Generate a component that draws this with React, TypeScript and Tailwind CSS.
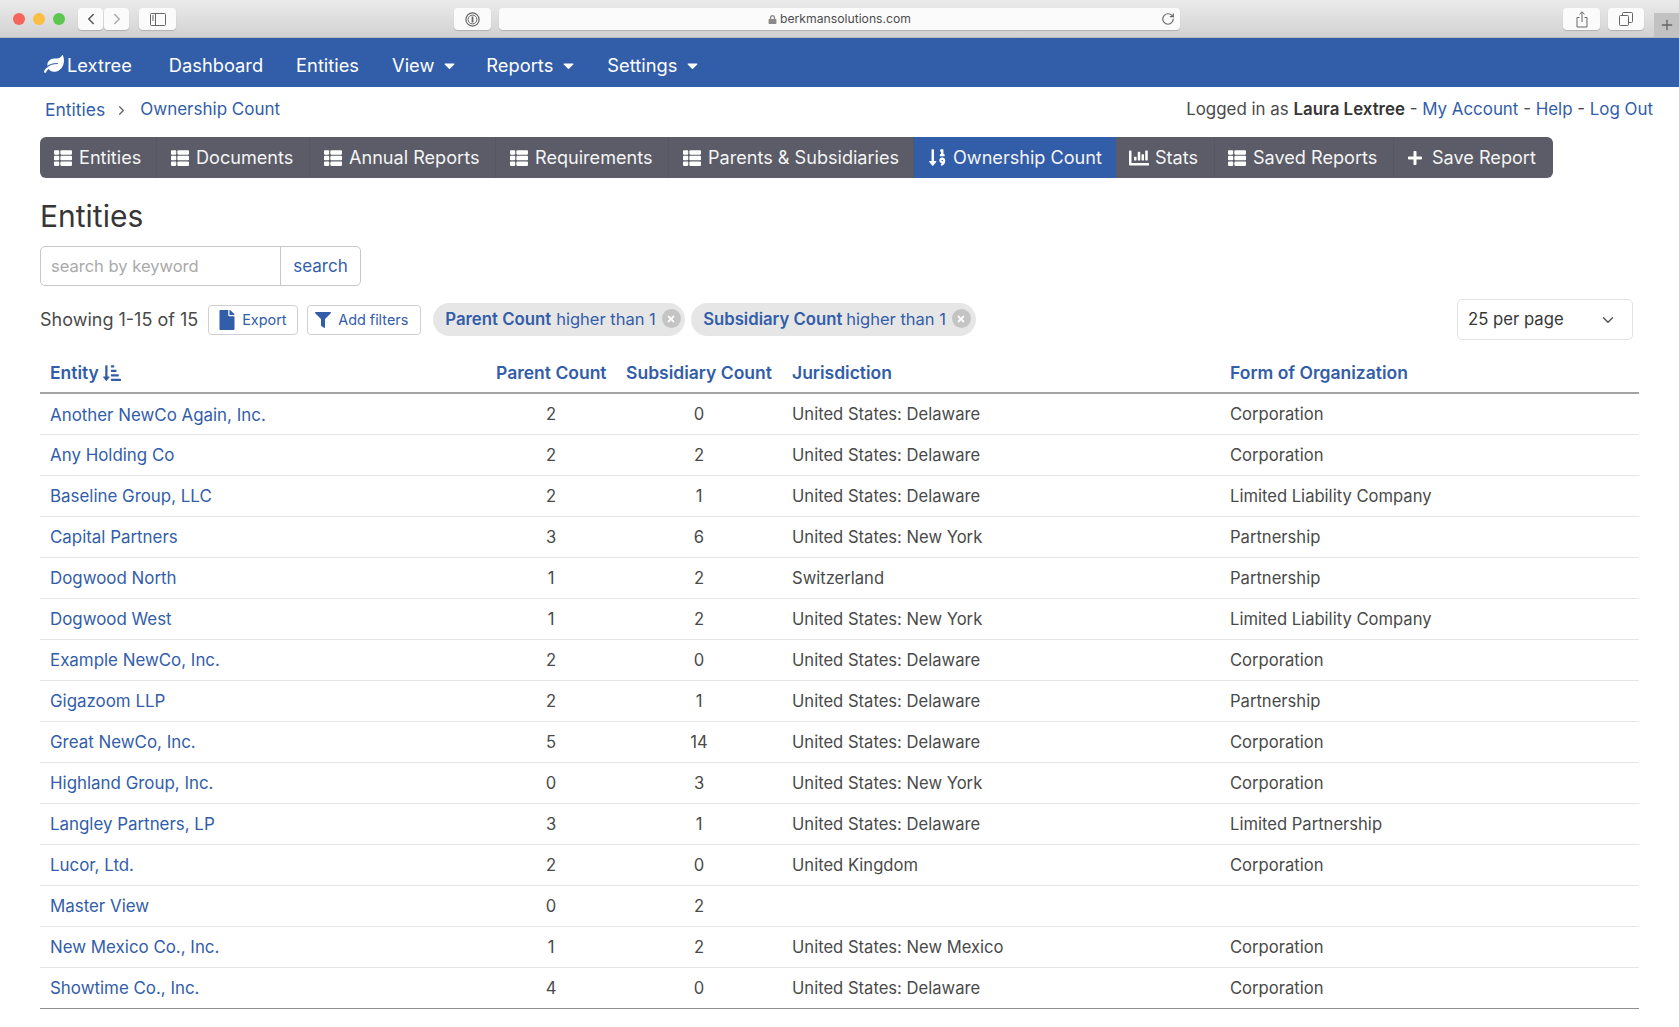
import React from "react";
import { FaLeaf, FaThList, FaSortNumericDown, FaChartBar, FaPlus, FaFile, FaFilter, FaSortAmountDownAlt, FaTimes, FaCaretDown, FaLock } from "react-icons/fa";
import { LuChevronLeft, LuChevronRight, LuChevronDown, LuRotateCw, LuPlus } from "react-icons/lu";

const rows: [string, string, string, string, string][] = [
  ["Another NewCo Again, Inc.", "2", "0", "United States: Delaware", "Corporation"],
  ["Any Holding Co", "2", "2", "United States: Delaware", "Corporation"],
  ["Baseline Group, LLC", "2", "1", "United States: Delaware", "Limited Liability Company"],
  ["Capital Partners", "3", "6", "United States: New York", "Partnership"],
  ["Dogwood North", "1", "2", "Switzerland", "Partnership"],
  ["Dogwood West", "1", "2", "United States: New York", "Limited Liability Company"],
  ["Example NewCo, Inc.", "2", "0", "United States: Delaware", "Corporation"],
  ["Gigazoom LLP", "2", "1", "United States: Delaware", "Partnership"],
  ["Great NewCo, Inc.", "5", "14", "United States: Delaware", "Corporation"],
  ["Highland Group, Inc.", "0", "3", "United States: New York", "Corporation"],
  ["Langley Partners, LP", "3", "1", "United States: Delaware", "Limited Partnership"],
  ["Lucor, Ltd.", "2", "0", "United Kingdom", "Corporation"],
  ["Master View", "0", "2", "", ""],
  ["New Mexico Co., Inc.", "1", "2", "United States: New Mexico", "Corporation"],
  ["Showtime Co., Inc.", "4", "0", "United States: Delaware", "Corporation"],
];

const tabs = [
  { label: "Entities", w: "w-[117px]", gap: "gap-[7px] pl-[14px]", icon: <FaThList className="text-[18px]" /> },
  { label: "Documents", w: "w-[153px]", gap: "gap-[7px] pl-[14px]", icon: <FaThList className="text-[18px]" /> },
  { label: "Annual Reports", w: "w-[186px]", gap: "gap-[7px] pl-[14px]", icon: <FaThList className="text-[18px]" /> },
  { label: "Requirements", w: "w-[173px]", gap: "gap-[7px] pl-[14px]", icon: <FaThList className="text-[18px]" /> },
  { label: "Parents & Subsidiaries", w: "w-[245px]", gap: "gap-[7px] pl-[14px]", icon: <FaThList className="text-[18px]" /> },
  { label: "Ownership Count", w: "w-[202px]", gap: "gap-[6px] pl-[14px]", icon: <FaSortNumericDown className="text-[19px]" />, active: true },
  { label: "Stats", w: "w-[99px]", gap: "gap-[6px] pl-[13px]", icon: <FaChartBar className="text-[20px]" /> },
  { label: "Saved Reports", w: "w-[179px]", gap: "gap-[7px] pl-[13px]", icon: <FaThList className="text-[18px]" /> },
  { label: "Save Report", w: "w-[159px]", gap: "gap-[9px] pl-[13px]", icon: <FaPlus className="text-[16px]" /> },
];

function ToolBtn({ className, children }: { className: string; children?: React.ReactNode }) {
  return (
    <div className={`h-[22px] bg-[#fbfbfb] rounded-[4px] shadow-[0_1px_1px_rgba(0,0,0,0.18)] flex items-center justify-center shrink-0 ${className}`}>
      {children}
    </div>
  );
}

function NavItem({ label, caret, className }: { label: string; caret?: boolean; className: string }) {
  return (
    <span className={`flex items-center gap-[7px] shrink-0 ${className}`}>
      {label}
      {caret && <FaCaretDown className="text-[17px]" />}
    </span>
  );
}

export default function App() {
  return (
    <div className="min-h-[1027px] bg-white [font-family:Inter,sans-serif] text-[16.8px] text-[#4a4a4a] overflow-hidden">
      {/* Safari chrome */}
      <div className="h-[38px] bg-gradient-to-b from-[#ebebeb] to-[#d2d2d2] border-b border-[#b9b9b9] flex items-start pt-[8px] relative">
        <div className="flex gap-[8px] ml-[13px] mt-[5px] shrink-0">
          <span className="w-[12px] h-[12px] rounded-full bg-[#f5655b]" />
          <span className="w-[12px] h-[12px] rounded-full bg-[#fbbe40]" />
          <span className="w-[12px] h-[12px] rounded-full bg-[#5cc74f]" />
        </div>
        <ToolBtn className="w-[25px] ml-[13px]"><LuChevronLeft className="text-[#555] text-[18px]" /></ToolBtn>
        <ToolBtn className="w-[25px] ml-px"><LuChevronRight className="text-[#aaa] text-[18px]" /></ToolBtn>
        <ToolBtn className="w-[37px] ml-[10px]">
          <svg width="16" height="13" viewBox="0 0 16 13" fill="none" stroke="#666" strokeWidth="1"><rect x="0.5" y="0.5" width="15" height="12" rx="1" /><line x1="5.5" y1="0.5" x2="5.5" y2="12.5" /><line x1="2" y1="3" x2="4" y2="3" /><line x1="2" y1="5" x2="4" y2="5" /><line x1="2" y1="7" x2="4" y2="7" /></svg>
        </ToolBtn>
        <ToolBtn className="w-[37px] ml-[278px]">
          <svg width="15" height="15" viewBox="0 0 15 15" fill="none" stroke="#666"><circle cx="7.5" cy="7.5" r="6.6" strokeWidth="1.2" /><circle cx="7.5" cy="7.5" r="4.4" strokeWidth="1" /><line x1="7.5" y1="4.5" x2="7.5" y2="10.5" strokeWidth="1.8" /></svg>
        </ToolBtn>
        <ToolBtn className="w-[681px] ml-[8px] relative">
          <span className="flex items-center gap-[3px] text-[12.2px] text-[#4d4d4d] pt-[1px]"><FaLock className="text-[9px] text-[#8a8a8a]" />berkmansolutions.com</span>
          <LuRotateCw className="absolute right-[5px] top-[4px] text-[14px] text-[#666]" />
        </ToolBtn>
        <ToolBtn className="w-[37px] ml-[383px]">
          <svg width="12" height="17" viewBox="0 0 12 17" fill="none" stroke="#666" strokeWidth="1"><path d="M3.5 6.5H1v9.5h10V6.5H8.5" /><path d="M6 11V1M3.5 3.2 6 .8l2.5 2.4" /></svg>
        </ToolBtn>
        <ToolBtn className="w-[36px] ml-[8px]">
          <svg width="14" height="14" viewBox="0 0 14 14" fill="none" stroke="#666" strokeWidth="1"><rect x="0.5" y="3.5" width="9" height="10" rx="1" /><path d="M3.5 3.5v-2a1 1 0 0 1 1-1h8a1 1 0 0 1 1 1v8a1 1 0 0 1-1 1h-3" /></svg>
        </ToolBtn>
        <div className="absolute right-0 top-[13px] w-[25px] h-[24px] bg-[#c2c2c2] flex items-center justify-center">
          <LuPlus className="text-[#666] text-[16px]" />
        </div>
      </div>

      {/* Nav */}
      <nav className="h-[49px] bg-[#325da9] text-white flex items-center text-[18.3px] pt-[6px]">
        <span className="flex items-center gap-[3px] ml-[44px] shrink-0"><FaLeaf className="text-[20px] mb-[3px]" />Lextree</span>
        <NavItem label="Dashboard" className="ml-[37px]" />
        <NavItem label="Entities" className="ml-[33px]" />
        <NavItem label="View" caret className="ml-[33px]" />
        <NavItem label="Reports" caret className="ml-[28px]" />
        <NavItem label="Settings" caret className="ml-[30px]" />
      </nav>

      {/* Breadcrumb */}
      <div className="h-[44px] flex items-center justify-between pl-[45px] pr-[26px] pt-[2px]">
        <div className="flex items-center text-[#325da9] text-[17px]">
          <span className="text-[17.5px]">Entities</span>
          <LuChevronRight className="text-[#666] text-[15px] ml-[9px] mr-[11px]" />
          <span>Ownership Count</span>
        </div>
        <div className="text-[16.9px]">
          Logged in as <b className="font-semibold text-[#363636]">Laura Lextree</b> - <span className="text-[#325da9]">My Account</span> - <span className="text-[#325da9]">Help</span> - <span className="text-[#325da9]">Log Out</span>
        </div>
      </div>

      {/* Main */}
      <div className="pl-[40px] pr-[40px] pt-[6px]">
        <div className="flex w-fit h-[41px] bg-[#5b5c67] rounded-[6px] overflow-hidden text-white text-[18.1px]">
          {tabs.map((t, i) => (
            <div key={t.label} className={`flex items-center ${t.gap} ${t.w} ${t.active ? "bg-[#325da9]" : ""} ${i < tabs.length - 1 && !t.active ? "border-r border-[#565761]" : ""}`}>
              {t.icon}
              <span className="whitespace-nowrap text-[#f4f4f5] pt-[1px]">{t.label}</span>
            </div>
          ))}
        </div>

        <h1 className="text-[30px] leading-[36px] text-[#363636] mt-[20px] font-normal">Entities</h1>

        <div className="flex mt-[12px] h-[40px] w-[321px] border border-[#c8c8c8] rounded-[5px]">
          <div className="w-[240px] border-r border-[#c8c8c8] flex items-center pl-[10px] text-[#a9a9a9] text-[16.5px]">search by keyword</div>
          <div className="flex-1 flex items-center justify-center text-[#325da9] text-[17px] pt-[2px]">search</div>
        </div>

        <div className="flex items-center mt-[13px] h-[41px]">
          <span className="whitespace-nowrap text-[18px]">Showing 1-15 of 15</span>
          <div className="ml-[10px] w-[90px] h-[30px] border border-[#d0d0d0] rounded-[4px] flex items-center gap-[5px] pl-[8px] text-[#325da9] text-[14.4px] shrink-0">
            <FaFile className="text-[20px]" />Export
          </div>
          <div className="ml-[9px] w-[114px] h-[30px] border border-[#d0d0d0] rounded-[4px] flex items-center gap-[7px] pl-[7px] text-[#325da9] text-[14.4px] shrink-0 whitespace-nowrap">
            <FaFilter className="text-[16px]" />Add filters
          </div>
          <div className="ml-[12px] w-[252px] h-[33px] rounded-full bg-[#e6e6e6] flex items-center pl-[12px] text-[#325da9] shrink-0">
            <b className="font-semibold whitespace-nowrap">Parent Count</b><span className="ml-[5px] whitespace-nowrap text-[16.5px]">higher than 1</span>
            <span className="ml-[6px] w-[19px] h-[19px] rounded-full bg-[#c4c4c4] flex items-center justify-center mb-[2px] shrink-0"><FaTimes className="text-white text-[10px]" /></span>
          </div>
          <div className="ml-[6px] w-[285px] h-[33px] rounded-full bg-[#e6e6e6] flex items-center pl-[12px] text-[#325da9] shrink-0">
            <b className="font-semibold whitespace-nowrap text-[16.7px]">Subsidiary Count</b><span className="ml-[4px] whitespace-nowrap text-[16.5px]">higher than 1</span>
            <span className="ml-[6px] w-[19px] h-[19px] rounded-full bg-[#c4c4c4] flex items-center justify-center mb-[2px] shrink-0"><FaTimes className="text-white text-[10px]" /></span>
          </div>
          <div className="ml-auto mr-[6px] w-[176px] h-[41px] border border-[#e3e3e3] rounded-[5px] flex items-center justify-between pl-[10px] pr-[15px] text-[#363636] text-[16.7px] shrink-0">
            25 per page
            <LuChevronDown className="text-[#555] text-[18px]" />
          </div>
        </div>

        <table className="w-[1599px] mt-[19px] border-collapse table-fixed">
          <thead>
            <tr className="h-[34px] border-b-2 border-[#a3a3a3] text-[#325da9] text-[17.5px]">
              <th className="w-[456px] text-left pl-[10px] font-semibold align-top pt-[1px]"><span className="flex items-center gap-[4px]">Entity <FaSortAmountDownAlt className="text-[18px]" /></span></th>
              <th className="w-[110px] font-semibold align-top whitespace-nowrap pt-[1px]">Parent Count</th>
              <th className="w-[186px] font-semibold align-top whitespace-nowrap pt-[1px]">Subsidiary Count</th>
              <th className="w-[438px] text-left font-semibold align-top pt-[1px]">Jurisdiction</th>
              <th className="text-left font-semibold align-top pt-[1px]">Form of Organization</th>
            </tr>
          </thead>
          <tbody>
            {rows.map((r, i) => (
              <tr key={r[0]} className={`h-[41px] border-b text-[16.6px] ${i === rows.length - 1 ? "border-[#8f8f8f]" : "border-[#e6e6e6]"}`}>
                <td className="pl-[10px] text-[#325da9] text-[16.9px] pt-[3px]">{r[0]}</td>
                <td className="text-center pt-[1px]">{r[1]}</td>
                <td className="text-center pt-[1px]">{r[2]}</td>
                <td className="pt-[1px]">{r[3]}</td>
                <td className="pt-[1px]">{r[4]}</td>
              </tr>
            ))}
          </tbody>
        </table>
      </div>
    </div>
  );
}
